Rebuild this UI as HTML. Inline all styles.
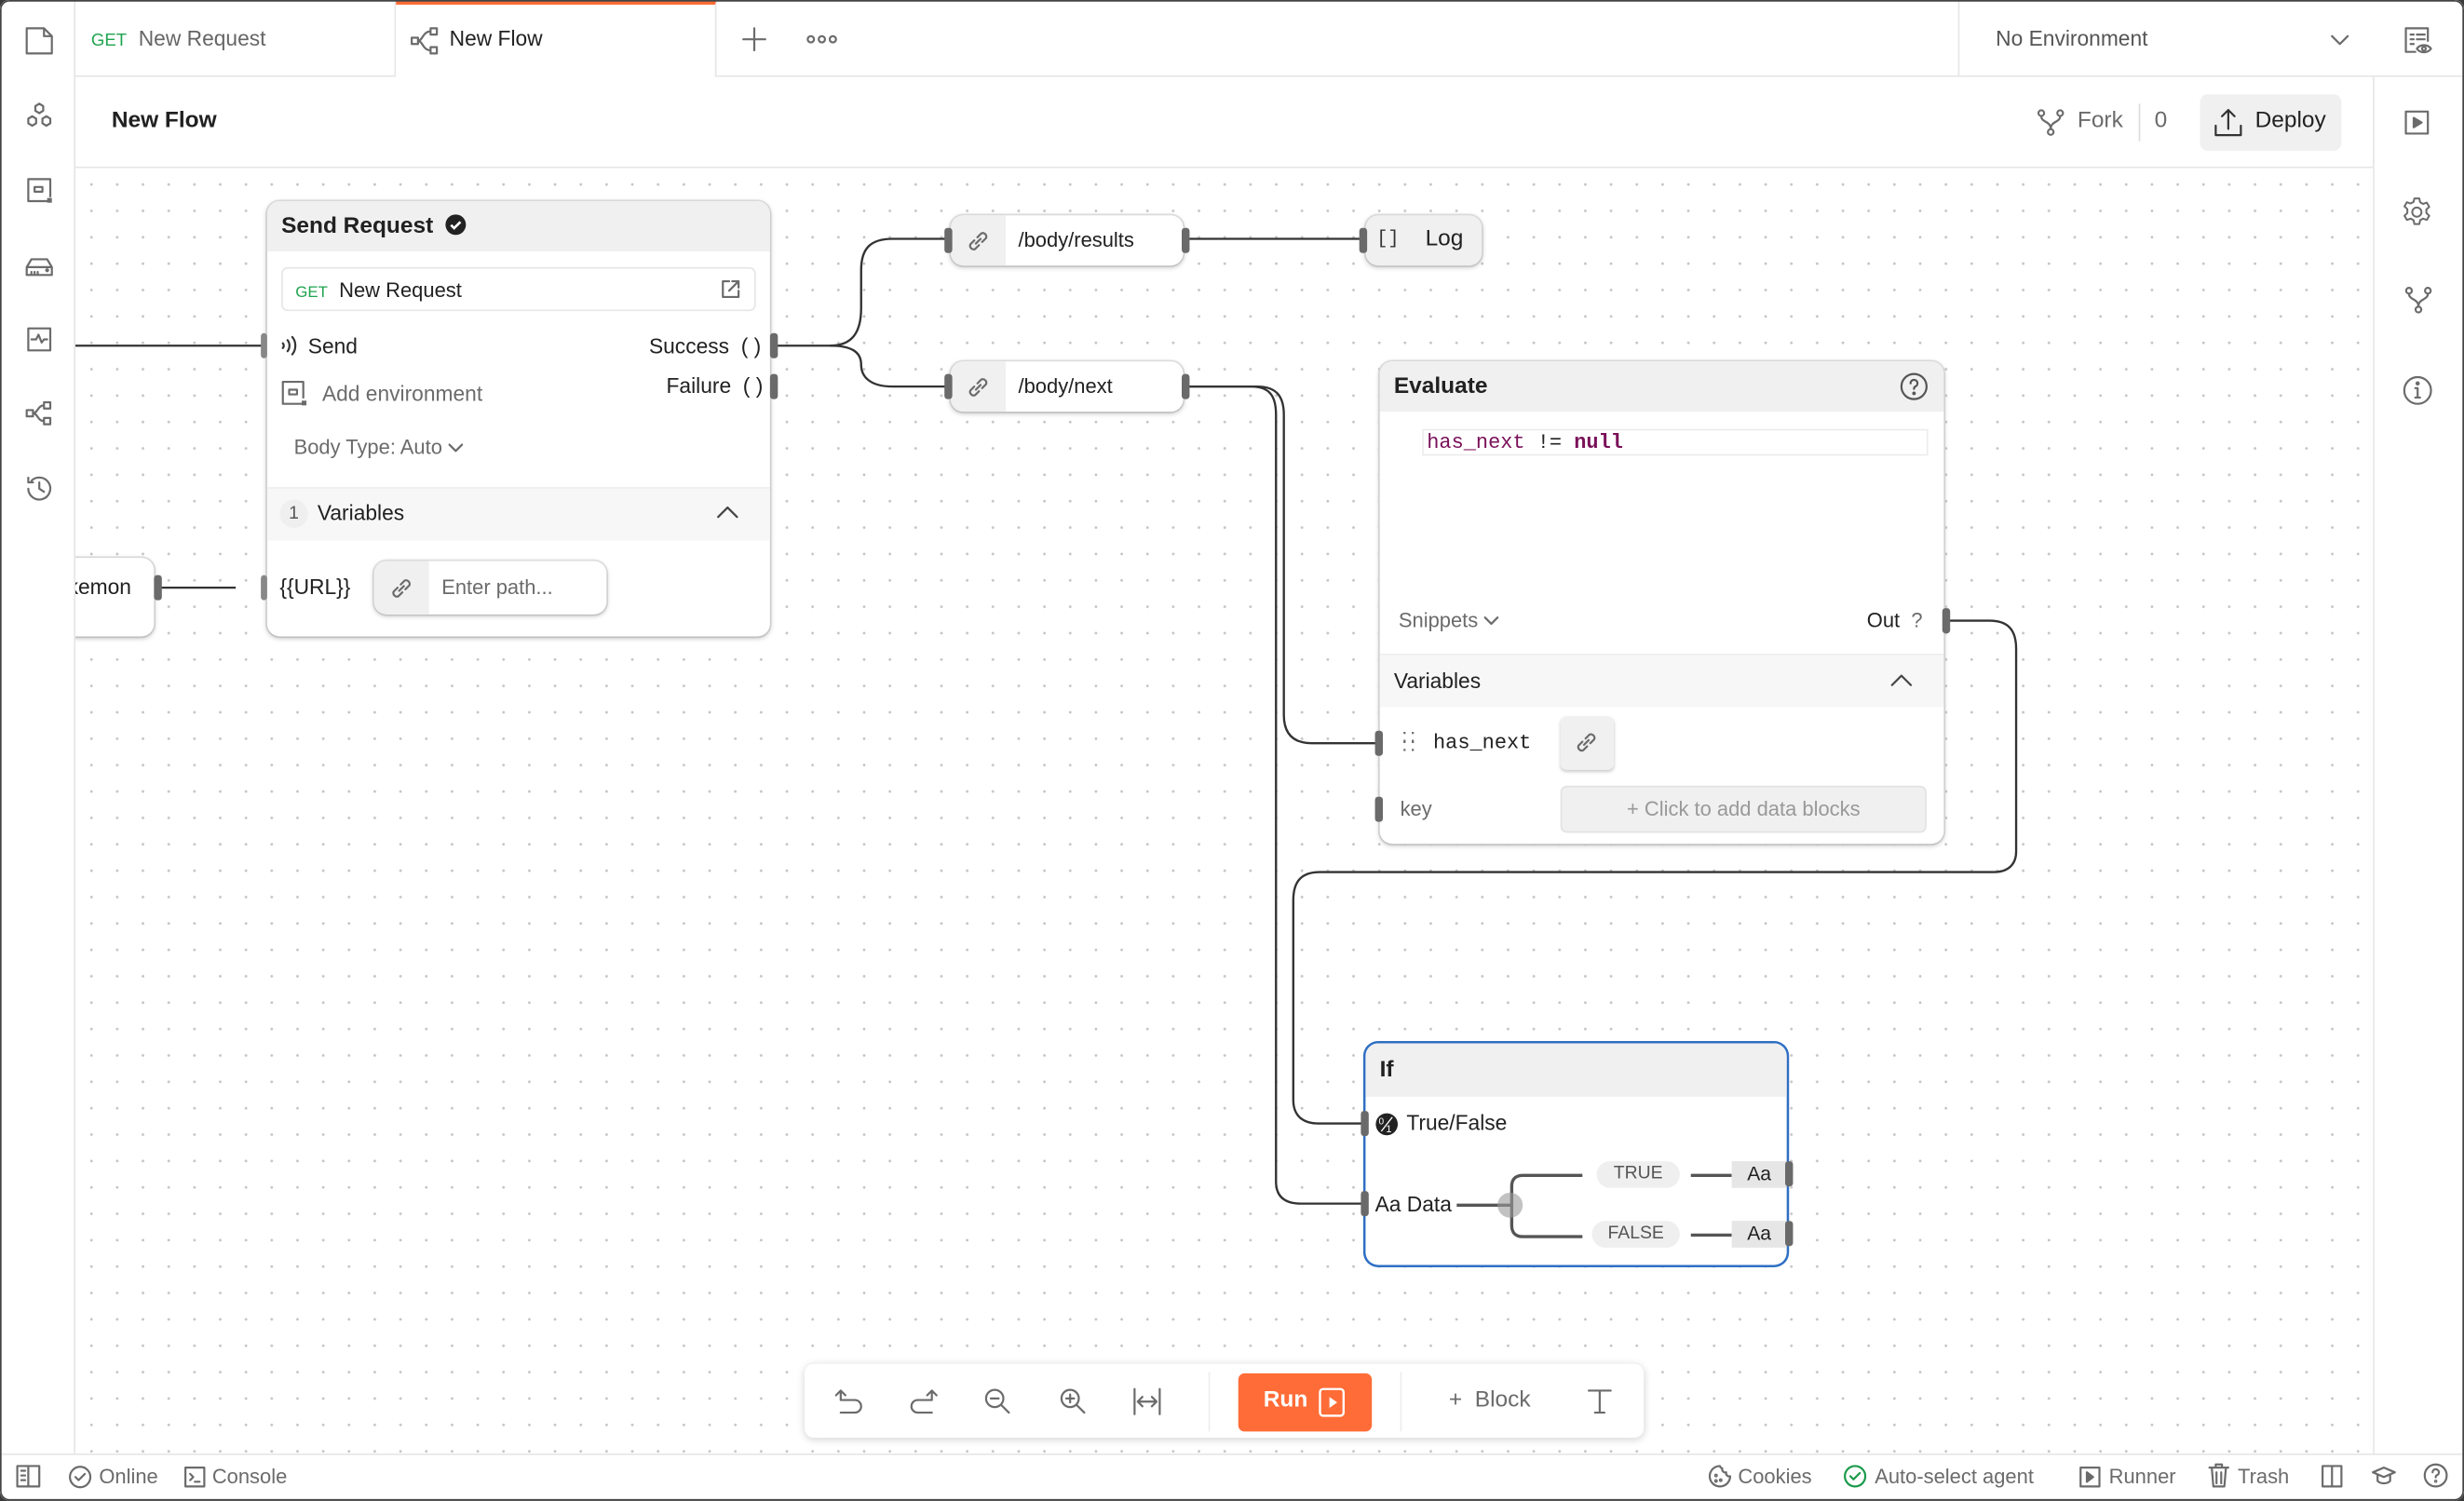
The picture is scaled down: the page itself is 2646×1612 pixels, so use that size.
<!DOCTYPE html>
<html><head><meta charset="utf-8"><style>
*{box-sizing:border-box;margin:0;padding:0}
html,body{width:2646px;height:1612px;overflow:hidden;background:#3a3a3a}
#s{position:absolute;left:0;top:0;width:1568px;height:955px;transform:scale(1.6875);transform-origin:0 0;font-family:"Liberation Sans",sans-serif;color:#212121;font-size:13px;background:#fff;border-radius:6px;overflow:hidden}
#fr{position:absolute;left:0;top:0;width:1568px;height:955px;border:1px solid #444;border-radius:6px;pointer-events:none}
.a{position:absolute}
.ic{position:absolute;fill:none;stroke:#6b6b6b;stroke-width:1.3;stroke-linecap:round;stroke-linejoin:round}
.canvas{position:absolute;left:48px;top:107px;width:1462px;height:818px;background-color:#fff;background-image:radial-gradient(circle,#c4c4c4 0.7px,transparent 1px);background-size:16.4px 16.8px;background-position:2px 2px}
.node{position:absolute;background:#fff;border-radius:8px;box-shadow:0 1px 3px rgba(0,0,0,.25),0 0 0 1px #e6e6e6}
.hd{position:absolute;left:0;top:0;right:0;background:#f0f0f0;border-radius:8px 8px 0 0;font-weight:bold;font-size:14.5px;padding-left:9px}
.h{position:absolute;width:5px;height:16px;background:#6a6a6a;border-radius:2px}
.g{color:#6b6b6b}
.pill{position:absolute;background:#fff;border-radius:8px;box-shadow:0 1px 3px rgba(0,0,0,.25),0 0 0 1px #e8e8e8;overflow:hidden}
.mono{font-family:"Liberation Mono","DejaVu Sans Mono",monospace}
</style></head><body><div id="s">

<!-- left sidebar -->
<div class="a" style="left:0;top:0;width:48px;height:925px;border-right:1px solid #e6e6e6;background:#fff"></div>
<svg class="ic" style="left:14px;top:15px" width="22" height="22" viewBox="0 0 22 22"><path d="M3 3h11l5 5v11H3z M14 3v5h5"/></svg>
<svg class="ic" style="left:14px;top:63px" width="22" height="22" viewBox="0 0 22 22"><path d="M11 3l2.5 1.5v3L11 9 8.5 7.5v-3z M6.5 11l2.5 1.5v3L6.5 17 4 15.5v-3z M15.5 11l2.5 1.5v3L15.5 17 13 15.5v-3z"/></svg>
<svg class="ic" style="left:14px;top:110px" width="22" height="22" viewBox="0 0 22 22"><path d="M16 18H4V4h14v11 M8 9h5v3H8z"/><rect x="16" y="16" width="3" height="3" fill="#6b6b6b" stroke="none"/></svg>
<svg class="ic" style="left:14px;top:158px" width="22" height="22" viewBox="0 0 22 22"><path d="M3 12l3-5h10l3 5v5H3z M3 12h16 M6 17v-2 M8 17v-2 M10 17v-2"/><circle cx="16" cy="14" r=".6" fill="#6b6b6b"/></svg>
<svg class="ic" style="left:14px;top:205px" width="22" height="22" viewBox="0 0 22 22"><path d="M4 4h14v14H4z M6 11h3l1.5-3 2 5 1.5-2h2"/></svg>
<svg class="ic" style="left:14px;top:252px" width="22" height="22" viewBox="0 0 22 22"><path d="M3 9h4v4H3z M14 4h4v4h-4z M14 14h4v4h-4z M7 11c3 0 3-5 7-5 M7 11c3 0 3 5 7 5"/></svg>
<svg class="ic" style="left:14px;top:300px" width="22" height="22" viewBox="0 0 22 22"><path d="M4 11a7 7 0 1 0 2-5 M4 4v3h3 M11 7v4l3 2"/></svg>

<!-- tabs -->
<div class="a" style="left:48px;top:0;width:1520px;height:49px;border-bottom:1px solid #e6e6e6;background:#fff"></div>
<div class="a" style="left:48px;top:0;width:204px;height:49px;border-right:1px solid #e6e6e6;"></div>
<div class="a" style="left:58px;top:17px;font-size:13.5px;color:#666"><span style="color:#1fa44f;font-size:11px">GET</span>&nbsp; New Request</div>
<div class="a" style="left:252px;top:0;width:204px;height:50px;border-right:1px solid #e6e6e6;border-top:3px solid #ff6c37;background:#fff"></div>
<svg class="ic" style="left:261px;top:17px" width="20" height="18" viewBox="0 0 20 18"><path d="M1 7h4v4H1z M13 1h4v4h-4z M13 13h4v4h-4z M5 9c3 0 3-6 8-6 M5 9c3 0 3 6 8 6"/></svg>
<div class="a" style="left:286px;top:17px;font-size:13.5px;color:#212121">New Flow</div>
<svg class="ic" style="left:472px;top:17px" width="16" height="16" viewBox="0 0 16 16"><path d="M8 1v14 M1 8h14"/></svg>
<svg class="ic" style="left:513px;top:20px" width="20" height="10" viewBox="0 0 20 10"><circle cx="3" cy="5" r="2"/><circle cx="10" cy="5" r="2"/><circle cx="17" cy="5" r="2"/></svg>
<div class="a" style="left:1246px;top:0;width:1px;height:49px;background:#e6e6e6"></div>
<div class="a" style="left:1270px;top:17px;font-size:13.5px;color:#555">No Environment</div>
<svg class="ic" style="left:1482px;top:19px" width="14" height="12" viewBox="0 0 14 12"><path d="M2 4l5 5 5-5"/></svg>
<svg class="ic" style="left:1528px;top:15px" width="22" height="22" viewBox="0 0 22 22"><path d="M9 18H3V3h14v8 M6 7h2 M10 7h5 M6 10h2 M10 10h5 M6 13h2"/><path d="M10 16c2-3 7-3 9 0c-2 3-7 3-9 0z"/><circle cx="14.5" cy="16" r="1.2"/></svg>

<!-- header row -->
<div class="a" style="left:48px;top:49px;width:1462px;height:58px;border-bottom:1px solid #e6e6e6;background:#fff"></div>
<div class="a" style="left:71px;top:69px;font-size:14.5px;font-weight:bold">New Flow</div>
<svg class="ic" style="left:1296px;top:69px" width="18" height="18" viewBox="0 0 18 18"><circle cx="3" cy="3" r="1.8"/><circle cx="15" cy="3" r="1.8"/><circle cx="9" cy="15" r="1.8"/><path d="M3 5c0 4 6 3 6 8 M15 5c0 4-6 3-6 8"/></svg>
<div class="a g" style="left:1322px;top:69px;font-size:14.5px">Fork</div>
<div class="a" style="left:1361px;top:66px;width:1px;height:24px;background:#ddd"></div>
<div class="a g" style="left:1371px;top:69px;font-size:14.5px">0</div>
<div class="a" style="left:1400px;top:60px;width:90px;height:36px;background:#f0f0f0;border-radius:5px"></div>
<svg class="ic" style="left:1408px;top:68px;stroke:#333" width="20" height="20" viewBox="0 0 20 20"><path d="M2 12v6h16v-6 M10 2v12 M6 6l4-4 4 4"/></svg>
<div class="a" style="left:1435px;top:69px;font-size:14.5px;color:#212121">Deploy</div>

<!-- right sidebar -->
<div class="a" style="left:1510px;top:49px;width:58px;height:876px;border-left:1px solid #e6e6e6;background:#fff"></div>
<svg class="ic" style="left:1528px;top:68px" width="20" height="20" viewBox="0 0 20 20"><path d="M3 3h14v14H3z"/><path d="M8 7l5 3-5 3z" fill="#6b6b6b"/></svg>
<svg class="ic" style="left:1527px;top:124px" width="22" height="22" viewBox="0 0 24 24"><circle cx="12" cy="12" r="3.2"/><path d="M10.3 2.5h3.4l.6 2.7 2 1.1 2.6-.9 1.7 2.9-2 1.9v2.4l2 1.9-1.7 2.9-2.6-.9-2 1.1-.6 2.7h-3.4l-.6-2.7-2-1.1-2.6.9-1.7-2.9 2-1.9V9.9l-2-1.9 1.7-2.9 2.6.9 2-1.100z"/></svg>
<svg class="ic" style="left:1530px;top:182px" width="18" height="18" viewBox="0 0 18 18"><circle cx="3" cy="3" r="1.8"/><circle cx="15" cy="3" r="1.8"/><circle cx="9" cy="15" r="1.8"/><path d="M3 5c0 4 6 3 6 8 M15 5c0 4-6 3-6 8"/></svg>
<svg class="ic" style="left:1528px;top:238px" width="21" height="21" viewBox="0 0 21 21"><circle cx="10.5" cy="10.5" r="8.5"/><path d="M10.5 9v6 M9 15h3 M9 9h1.5"/><circle cx="10.5" cy="6" r=".7" fill="#6b6b6b"/></svg>

<!-- canvas -->
<div class="canvas"></div>

<!-- wires -->
<svg class="a" style="left:0;top:0" width="1568" height="955" viewBox="0 0 1568 955" fill="none" stroke="#333" stroke-width="1.4">
<path d="M48 220H168"/>
<path d="M101 374H150"/>
<path d="M492 220H528c14 0 20-8 20-24V172c0-14 6-20 20-20H604"/>
<path d="M528 220c14 0 20 4 20 12c0 8 6 14 20 14H604"/>
<path d="M755 152H868"/>
<path d="M755 246H796c12 0 16 6 16 18V752c0 10 6 14 16 14H868"/>
<path d="M755 246H800c12 0 17 6 17 18V455c0 12 6 18 18 18H877"/>
<path d="M1240 395H1266c12 0 17 6 17 18V542c0 8-5 13-14 13H840c-12 0-17 6-17 18V700c0 10 6 15 16 15H868"/>
</svg>

<!-- left partial node (clipped at canvas edge) -->
<div class="a" style="left:48px;top:350px;width:60px;height:62px;overflow:hidden">
 <div class="node" style="left:-30px;top:5px;width:80px;height:50px"></div>
 <div class="a" style="left:-5px;top:16px;font-size:13.5px">kemon</div>
</div>
<div class="h" style="left:98px;top:366px"></div>

<!-- Send Request -->
<div class="node" style="left:170px;top:128px;width:320px;height:277px">
 <div class="hd" style="height:32px;line-height:32px">Send Request <svg style="vertical-align:-2px;margin-left:3px" width="14" height="14" viewBox="0 0 14 14"><circle cx="7" cy="7" r="6.5" fill="#222"/><path d="M4 7.2l2 2 4-4" stroke="#fff" stroke-width="1.6" fill="none"/></svg></div>
 <div class="a" style="left:9px;top:42px;width:302px;height:28px;border:1px solid #e6e6e6;border-radius:4px;"></div>
 <div class="a" style="left:18px;top:49px;font-size:13px"><span style="color:#1fa44f;font-size:10px">GET</span>&nbsp; New Request</div>
 <svg class="ic" style="left:288px;top:49px" width="14" height="14" viewBox="0 0 14 14"><path d="M6 2H2v10h10V8 M8 2h4v4 M12 2L6 8"/></svg>
 <svg class="ic" style="left:8px;top:85px;stroke:#333" width="12" height="14" viewBox="0 0 12 14"><path d="M2 5.5c.8 1 .8 2 0 3 M5 3.5c1.6 2 1.6 5 0 7 M8 1.5c2.6 3 2.6 8 0 11"/></svg>
 <div class="a" style="left:26px;top:85px;font-size:13.5px">Send</div>
 <div class="a" style="left:243px;top:85px;font-size:13.5px">Success&nbsp; ( )</div>
 <div class="a" style="left:254px;top:110px;font-size:13.5px">Failure&nbsp; ( )</div>
 <svg class="ic" style="left:9px;top:114px" width="17" height="17" viewBox="0 0 17 17"><path d="M13 15H1V1h13v10 M5 6h5v3H5z"/><rect x="13" y="13" width="3" height="3" fill="#6b6b6b" stroke="none"/></svg>
 <div class="a g" style="left:35px;top:115px;font-size:13.5px">Add environment</div>
 <div class="a g" style="left:17px;top:149px;font-size:13px">Body Type: Auto <svg class="ic" style="position:static;vertical-align:0" width="10" height="8" viewBox="0 0 10 8"><path d="M1 2l4 4 4-4"/></svg></div>
 <div class="a" style="left:0;top:182px;width:320px;height:34px;background:#f7f7f7;border-top:1px solid #eee"></div>
 <div class="a" style="left:8px;top:190px;width:18px;height:18px;border-radius:9px;background:#efefef;text-align:center;line-height:18px;font-size:11.5px;color:#555">1</div>
 <div class="a" style="left:32px;top:191px;font-size:13.5px">Variables</div>
 <svg class="ic" style="left:285px;top:192px;stroke:#444" width="16" height="12" viewBox="0 0 16 12"><path d="M2 9l6-6 6 6"/></svg>
 <div class="a" style="left:8px;top:238px;font-size:13.5px">{{URL}}</div>
 <div class="pill" style="left:68px;top:229px;width:148px;height:34px">
  <div class="a" style="left:0;top:0;width:35px;height:34px;background:#f0f0f0"></div>
  <svg class="ic" style="left:9px;top:9px" width="17" height="17" viewBox="0 0 17 17"><path d="M7 10l3-3 M6 8l-2.5 2.5a2.3 2.3 0 0 0 3 3L9 11 M11 9l2.5-2.5a2.3 2.3 0 0 0-3-3L8 6"/></svg>
  <div class="a g" style="left:43px;top:9px;font-size:13px">Enter path...</div>
 </div>
</div>
<div class="h" style="left:166px;top:212px;width:4px;background:#888"></div>
<div class="h" style="left:166px;top:366px;width:4px;background:#888"></div>
<div class="h" style="left:490px;top:212px"></div>
<div class="h" style="left:490px;top:238px"></div>

<!-- /body/results -->
<div class="pill" style="left:605px;top:137px;width:148px;height:32px">
 <div class="a" style="left:0;top:0;width:35px;height:32px;background:#f0f0f0"></div>
 <svg class="ic" style="left:9px;top:8px" width="17" height="17" viewBox="0 0 17 17"><path d="M7 10l3-3 M6 8l-2.5 2.5a2.3 2.3 0 0 0 3 3L9 11 M11 9l2.5-2.5a2.3 2.3 0 0 0-3-3L8 6"/></svg>
 <div class="a" style="left:43px;top:8px;font-size:13px">/body/results</div>
</div>
<div class="h" style="left:601px;top:145px"></div><div class="h" style="left:752px;top:145px"></div>
<!-- /body/next -->
<div class="pill" style="left:605px;top:230px;width:148px;height:32px">
 <div class="a" style="left:0;top:0;width:35px;height:32px;background:#f0f0f0"></div>
 <svg class="ic" style="left:9px;top:8px" width="17" height="17" viewBox="0 0 17 17"><path d="M7 10l3-3 M6 8l-2.5 2.5a2.3 2.3 0 0 0 3 3L9 11 M11 9l2.5-2.5a2.3 2.3 0 0 0-3-3L8 6"/></svg>
 <div class="a" style="left:43px;top:8px;font-size:13px">/body/next</div>
</div>
<div class="h" style="left:601px;top:238px"></div><div class="h" style="left:752px;top:238px"></div>
<!-- Log -->
<div class="pill" style="left:869px;top:137px;width:74px;height:32px;background:#f0f0f0">
 <div class="a mono" style="left:7px;top:8px;font-size:12px;color:#333">[]</div>
 <div class="a" style="left:38px;top:7px;font-size:14.5px">Log</div>
</div>
<div class="h" style="left:865px;top:145px"></div>

<!-- Evaluate -->
<div class="node" style="left:878px;top:230px;width:359px;height:307px">
 <div class="hd" style="height:32px;line-height:32px">Evaluate</div>
 <svg class="ic" style="left:331px;top:7px;stroke:#555" width="18" height="18" viewBox="0 0 18 18"><circle cx="9" cy="9" r="8"/><path d="M6.8 7a2.2 2.2 0 1 1 3 2c-.7.3-.8.8-.8 1.5"/><circle cx="9" cy="13.3" r=".5" fill="#555"/></svg>
 <div class="a" style="left:27px;top:43px;width:322px;height:17px;border:1px solid #ececec;background:#fff"></div>
 <div class="a mono" style="left:30px;top:44px;font-size:13px;color:#7a1059">has_next <span style="color:#222">!=</span> <b>null</b></div>
 <div class="a g" style="left:12px;top:157px;font-size:13px">Snippets <svg class="ic" style="position:static" width="10" height="8" viewBox="0 0 10 8"><path d="M1 2l4 4 4-4"/></svg></div>
 <div class="a" style="left:310px;top:157px;font-size:13px">Out&nbsp; <span class="g">?</span></div>
 <div class="a" style="left:0;top:186px;width:359px;height:34px;background:#f7f7f7;border-top:1px solid #eee"></div>
 <div class="a" style="left:9px;top:196px;font-size:13.5px">Variables</div>
 <svg class="ic" style="left:324px;top:197px;stroke:#444" width="16" height="12" viewBox="0 0 16 12"><path d="M2 9l6-6 6 6"/></svg>
 <div class="a" style="left:14px;top:236px;font-size:13px;color:#666;letter-spacing:-1px;line-height:5px">: :<br>: :</div>
 <div class="a mono" style="left:34px;top:235px;font-size:13px">has_next</div>
 <div class="a" style="left:115px;top:226px;width:34px;height:34px;background:#f0f0f0;border-radius:4px;box-shadow:0 1px 2px rgba(0,0,0,.2)"></div>
 <svg class="ic" style="left:123px;top:234px" width="17" height="17" viewBox="0 0 17 17"><path d="M7 10l3-3 M6 8l-2.5 2.5a2.3 2.3 0 0 0 3 3L9 11 M11 9l2.5-2.5a2.3 2.3 0 0 0-3-3L8 6"/></svg>
 <div class="a g" style="left:13px;top:277px;font-size:13px">key</div>
 <div class="a" style="left:115px;top:270px;width:233px;height:30px;background:#f0f0f0;border:1px solid #e2e2e2;border-radius:4px;text-align:center;line-height:28px;color:#999;font-size:13px">+ Click to add data blocks</div>
</div>
<div class="h" style="left:875px;top:465px"></div>
<div class="h" style="left:875px;top:507px"></div>
<div class="h" style="left:1236px;top:387px"></div>

<!-- If -->
<div class="node" style="left:869px;top:664px;width:268px;height:141px;box-shadow:0 0 0 1.5px #2f6fc4">
 <div class="hd" style="height:34px;line-height:34px;font-size:14.5px">If</div>
 <svg style="position:absolute;left:6px;top:44px" width="15" height="15" viewBox="0 0 15 15"><circle cx="7.5" cy="7.5" r="7" fill="#222"/><text x="2.3" y="7.5" font-size="6" fill="#fff" font-family="Liberation Sans">0</text><text x="7" y="12.5" font-size="6.5" fill="#fff" font-family="Liberation Sans">1</text><path d="M4 12L11 3" stroke="#fff" stroke-width=".8"/></svg>
 <div class="a" style="left:26px;top:43px;font-size:13.5px">True/False</div>
 <div class="a" style="left:6px;top:95px;font-size:13.5px">Aa Data</div>
 <svg class="a" style="left:0;top:0" width="268" height="141" fill="none" stroke="#555" stroke-width="2"><path d="M58 103H92 M138 84H100c-5 0-7 3-7 7v25c0 4 2 7 7 7h38 M207 84H233 M207 122H233"/><circle cx="92" cy="103" r="8" fill="#999" fill-opacity=".6" stroke="none"/></svg>
 <div class="a" style="left:147px;top:75px;width:53px;height:17px;border-radius:9px;background:#efefef;text-align:center;font-size:11.5px;line-height:17px;color:#555">TRUE</div>
 <div class="a" style="left:144px;top:113px;width:56px;height:17px;border-radius:9px;background:#efefef;text-align:center;font-size:11.5px;line-height:17px;color:#555">FALSE</div>
 <div class="a" style="left:233px;top:75px;width:35px;height:17px;background:#e6e6e6;text-align:center;font-size:12.5px;line-height:17px">Aa</div>
 <div class="a" style="left:233px;top:113px;width:35px;height:17px;background:#e6e6e6;text-align:center;font-size:12.5px;line-height:17px">Aa</div>
</div>
<div class="h" style="left:866px;top:707px"></div>
<div class="h" style="left:866px;top:758px"></div>
<div class="h" style="left:1136px;top:739px"></div>
<div class="h" style="left:1136px;top:777px"></div>

<!-- toolbar -->
<div class="a" style="left:512px;top:868px;width:534px;height:47px;background:#fff;border-radius:6px;box-shadow:0 1px 5px rgba(0,0,0,.18)"></div>
<svg class="ic" style="left:530px;top:882px" width="20" height="20" viewBox="0 0 20 20"><path d="M5 4v5h9a4 4 0 0 1 0 8H5 M2 6l3-3 3 3"/></svg>
<svg class="ic" style="left:578px;top:882px" width="20" height="20" viewBox="0 0 20 20"><path d="M15 4v5H6a4 4 0 0 0 0 8h9 M12 6l3-3 3 3"/></svg>
<svg class="ic" style="left:625px;top:882px" width="20" height="20" viewBox="0 0 20 20"><circle cx="8" cy="8" r="5.5"/><path d="M12 12l5 5 M5.5 8h5"/></svg>
<svg class="ic" style="left:673px;top:882px" width="20" height="20" viewBox="0 0 20 20"><circle cx="8" cy="8" r="5.5"/><path d="M12 12l5 5 M5.5 8h5 M8 5.5v5"/></svg>
<svg class="ic" style="left:720px;top:882px" width="20" height="20" viewBox="0 0 20 20"><path d="M2 2v16 M18 2v16 M5 10h10 M7 7l-3 3 3 3 M13 7l3 3-3 3"/></svg>
<div class="a" style="left:769px;top:873px;width:1px;height:38px;background:#eee"></div>
<div class="a" style="left:788px;top:874px;width:85px;height:37px;background:#ff6c37;border-radius:4px"></div>
<div class="a" style="left:804px;top:883px;font-size:14.5px;font-weight:bold;color:#fff">Run</div>
<svg class="a" style="left:839px;top:883px" width="18" height="20" viewBox="0 0 18 20"><rect x="1" y="1" width="15" height="17" rx="2" fill="none" stroke="#fff" stroke-width="1.4"/><path d="M7 6l5 3.5-5 3.5z" fill="#fff"/></svg>
<div class="a" style="left:891px;top:873px;width:1px;height:38px;background:#eee"></div>
<div class="a g" style="left:922px;top:883px;font-size:14.5px">+&nbsp; Block</div>
<svg class="ic" style="left:1008px;top:882px" width="20" height="20" viewBox="0 0 20 20"><path d="M3 3h14 M10 3v14 M7 17h6"/></svg>

<!-- status bar -->
<div class="a" style="left:0;top:925px;width:1568px;height:30px;border-top:1px solid #e6e6e6;background:#fff"></div>
<svg class="ic" style="left:10px;top:932px" width="16" height="15" viewBox="0 0 16 15"><path d="M1 1h14v13H1z M8 1v13 M3.5 4h2.5 M3.5 7h2.5 M3.5 10h2.5"/></svg>
<svg class="ic" style="left:43px;top:932px" width="16" height="16" viewBox="0 0 16 16"><circle cx="8" cy="8" r="6.5"/><path d="M5 8l2 2 4-4"/></svg>
<div class="a g" style="left:63px;top:932px;font-size:13px">Online</div>
<svg class="ic" style="left:117px;top:933px" width="14" height="14" viewBox="0 0 14 14"><path d="M1 1h12v12H1z M4 5l2 2-2 2 M7 10h3"/></svg>
<div class="a g" style="left:135px;top:932px;font-size:13px">Console</div>
<svg class="ic" style="left:1087px;top:932px" width="15" height="15" viewBox="0 0 15 15"><path d="M7.5 1a6.5 6.5 0 1 0 6.5 6.5 2 2 0 0 1-2.5-2.5 2 2 0 0 1-2.5-2.5A2 2 0 0 1 7.5 1z"/><circle cx="5" cy="7" r=".5"/><circle cx="8" cy="10" r=".5"/><circle cx="5" cy="10.5" r=".5"/></svg>
<div class="a g" style="left:1106px;top:932px;font-size:13px">Cookies</div>
<svg class="ic" style="left:1173px;top:932px;stroke:#1a9a4a" width="15" height="15" viewBox="0 0 15 15"><circle cx="7.5" cy="7.5" r="6.5"/><path d="M4.5 7.5l2 2 4-4"/></svg>
<div class="a g" style="left:1193px;top:932px;font-size:13px">Auto-select agent</div>
<svg class="ic" style="left:1323px;top:933px" width="14" height="14" viewBox="0 0 14 14"><path d="M1 1h12v12H1z"/><path d="M5 4l4 3-4 3z" fill="#6b6b6b"/></svg>
<div class="a g" style="left:1342px;top:932px;font-size:13px">Runner</div>
<svg class="ic" style="left:1405px;top:931px" width="14" height="16" viewBox="0 0 14 16"><path d="M1 3h12 M5 3V1h4v2 M2.5 3l1 12h7l1-12 M5.5 6v7 M8.5 6v7"/></svg>
<div class="a g" style="left:1424px;top:932px;font-size:13px">Trash</div>
<svg class="ic" style="left:1477px;top:932px" width="14" height="15" viewBox="0 0 14 15"><path d="M1 1h12v13H1z M7 1v13"/></svg>
<svg class="ic" style="left:1509px;top:932px" width="16" height="15" viewBox="0 0 16 15"><path d="M1 5l7-3 7 3-7 3z M4 6.5v4c2 2 6 2 8 0v-4"/></svg>
<svg class="ic" style="left:1542px;top:931px" width="16" height="16" viewBox="0 0 16 16"><circle cx="8" cy="8" r="7"/><path d="M6 6a2 2 0 1 1 2.7 1.9c-.5.2-.7.6-.7 1.3"/><circle cx="8" cy="11.7" r=".4"/></svg>

<div id="fr"></div>
</div></body></html>
